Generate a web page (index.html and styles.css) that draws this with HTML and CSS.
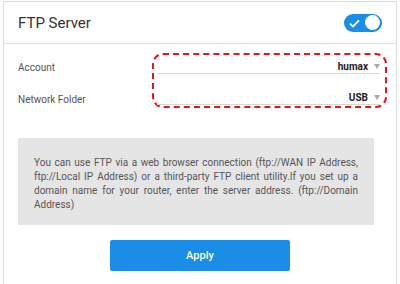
FILE: index.html
```html
<!DOCTYPE html>
<html lang="en">
<head>
    <meta charset="UTF-8">
    <title>FTP Server</title>
    <link rel="stylesheet" href="styles.css">
</head>
<body>
    <div class="card">
        <div class="card-head">
            <h2>FTP Server</h2>
            <div class="toggle">
                <svg class="check" width="11" height="9" viewBox="0 0 11 9">
                    <path d="M1 4.6 L4 7.4 L10 1.4" fill="none" stroke="#fff" stroke-width="1.8"/>
                </svg>
                <span class="knob"></span>
            </div>
        </div>

        <div class="card-body">
            <div class="fields">
                <div class="labels">
                    <div class="label">Account</div>
                    <div class="label">Network Folder</div>
                </div>
                <div class="selects">
                    <div class="select"><span>humax</span><i class="caret"></i></div>
                    <div class="select"><span>USB</span><i class="caret"></i></div>
                </div>
            </div>

            <div class="note">
                You can use FTP via a web browser connection (ftp://WAN IP Address, ftp://Local IP Address) or a third-party FTP client utility.If you set up a domain name for your router, enter the server address. (ftp://Domain Address)
            </div>

            <div class="actions">
                <button class="btn">Apply</button>
            </div>
        </div>
    </div>
</body>
</html>
```

FILE: styles.css
```css
body {
    font-family: Roboto, "Liberation Sans", sans-serif;
    background: #fff;
    color: #555;
    margin: 0;
    padding: 1px 3px 0 3px;
}
.card {
    border: 1px solid #ddd;
    border-bottom: none;
    height: 290px;
}
.card-head {
    display: flex;
    align-items: center;
    justify-content: space-between;
    height: 41px;
    padding: 0 14px 0 14px;
    border-bottom: 1px solid #ddd;
}
.card-head h2 {
    margin: 0;
    font-size: 15px;
    font-weight: 400;
    color: #333;
}
.toggle {
    position: relative;
    width: 38px;
    height: 18px;
    border-radius: 9px;
    background: #1a8de6;
}
.check { position: absolute; left: 5px; top: 5px; }
.knob {
    position: absolute;
    right: 2px;
    top: 1.5px;
    width: 15px;
    height: 15px;
    border-radius: 50%;
    background: #fff;
}
.card-body { padding: 9px 9px 0 14px; }
.fields { display: flex; align-items: flex-start; }
.labels {
    width: 134px;
    display: flex;
    flex-direction: column;
    gap: 12px;
    padding-top: 5px;
    font-size: 10px;
}
.label { height: 20px; line-height: 20px; }
.selects {
    flex: 1;
    border: 2px dashed #e8141c;
    border-radius: 11px;
    padding: 4px 5px 1px 3px;
}
.select {
    display: flex;
    justify-content: flex-end;
    align-items: center;
    height: 14px;
    border-bottom: 1px solid #d8d8d8;
    font-size: 10px;
    font-weight: 700;
    color: #222;
}
.select + .select { margin-top: 16px; }
.caret {
    width: 0;
    height: 0;
    margin-left: 6px;
    border-left: 3.5px solid transparent;
    border-right: 3.5px solid transparent;
    border-top: 5px solid #aaa;
}
.note {
    margin: 28px 13px 0 0;
    background: #e5e5e5;
    padding: 18px 16px 13px 16px;
    font-size: 10px;
    line-height: 14px;
    text-align: justify;
    color: #555;
}
.actions { display: flex; justify-content: center; padding-top: 15px; margin-right: 5px; }
.btn {
    width: 180px;
    height: 31px;
    background: #1a8de6;
    color: #fff;
    border: none;
    border-radius: 2px;
    font-family: Roboto, "Liberation Sans", sans-serif;
    font-size: 11px;
    font-weight: 500;
}
```
